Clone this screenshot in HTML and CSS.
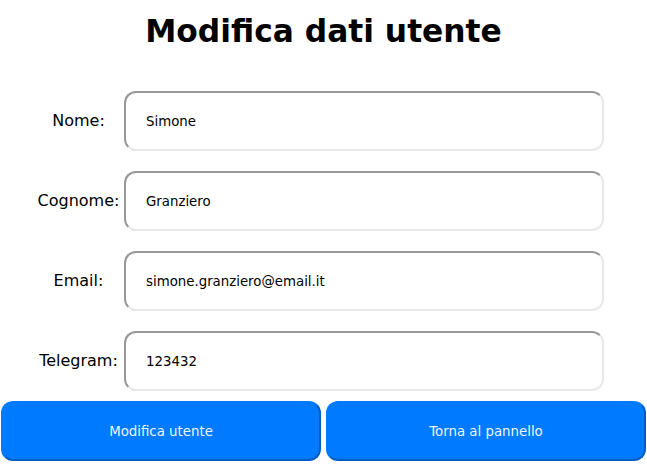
FILE: index.html
```html
<!DOCTYPE html>
<html lang="it">
<head>
<meta charset="utf-8">
<title>Modifica dati utente</title>
<link rel="stylesheet" href="styles.css">
</head>
<body>
<h1 class="title">Modifica dati utente</h1>
<form class="form">
  <div class="fields">
    <label class="label" for="nome">Nome:</label>
    <input class="input" id="nome" type="text" value="Simone">
    <label class="label" for="cognome">Cognome:</label>
    <input class="input" id="cognome" type="text" value="Granziero">
    <label class="label" for="email">Email:</label>
    <input class="input" id="email" type="text" value="simone.granziero@email.it">
    <label class="label" for="telegram">Telegram:</label>
    <input class="input" id="telegram" type="text" value="123432">
  </div>
  <div class="actions">
    <button class="btn" type="button">Modifica utente</button>
    <button class="btn" type="button">Torna al pannello</button>
  </div>
</form>
</body>
</html>
```
FILE: styles.css
```css
html, body {
  margin: 0;
  padding: 0;
  background: #ffffff;
}
body {
  font-family: "DejaVu Sans", Verdana, sans-serif;
  color: #000;
}
.title {
  margin: 12px 0 0 0;
  font-size: 31.3px;
  font-weight: bold;
  text-align: center;
  line-height: 38px;
}
.form {
  margin: 0;
}
.fields {
  display: grid;
  grid-template-columns: 91px 480px;
  column-gap: 0;
  row-gap: 20px;
  padding-left: 33px;
  margin-top: 41px;
  align-items: center;
}
.label {
  font-size: 16px;
  text-align: center;
  white-space: nowrap;
  margin-bottom: 2px;
}
.input {
  box-sizing: border-box;
  height: 60px;
  width: 480px;
  border-style: solid;
  border-width: 2px;
  border-top-color: #999999;
  border-left-color: #999999;
  border-right-color: #e8e8e8;
  border-bottom-color: #e8e8e8;
  border-radius: 12px;
  padding: 0 0 0 20px;
  font-family: "DejaVu Sans", Verdana, sans-serif;
  font-size: 13.33px;
  color: #000;
  background: #fff;
  outline: none;
}
.actions {
  display: flex;
  gap: 5px;
  padding: 0 1px;
  margin-top: 10px;
}
.btn {
  box-sizing: border-box;
  width: 320px;
  height: 60px;
  background: #007bff;
  color: #eef4ff;
  border-style: solid;
  border-width: 2px;
  border-top-color: #007bff;
  border-left-color: #007bff;
  border-right-color: #005ec4;
  border-bottom-color: #005ec4;
  border-radius: 12px;
  font-family: "DejaVu Sans", Verdana, sans-serif;
  font-size: 13.33px;
}
```
